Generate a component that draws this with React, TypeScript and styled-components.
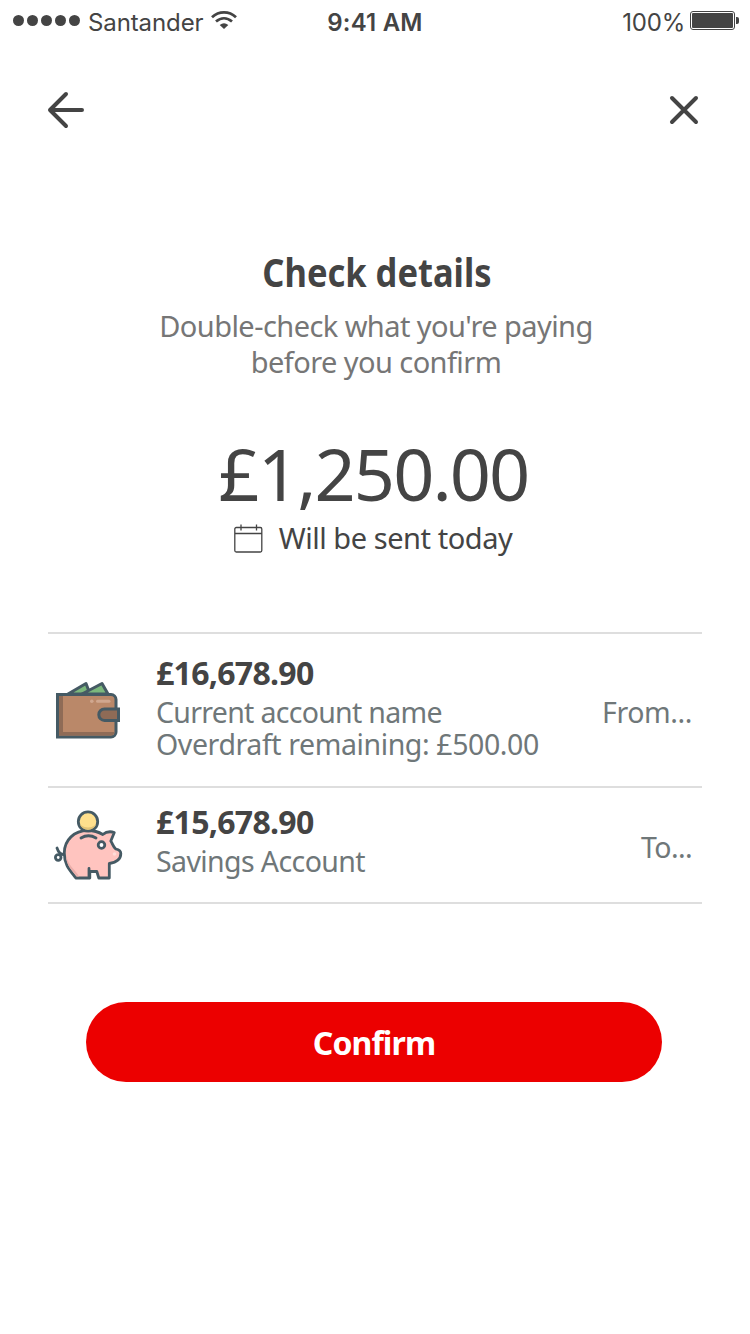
import React from "react";
import styled, { createGlobalStyle } from "styled-components";

const GlobalStyle = createGlobalStyle`
  * { box-sizing: border-box; }
  body { margin: 0; background: #fff; }
`;

const ink = "#444444";
const grey = "#767676";
const slate = "#6f7779";

const Screen = styled.main`
  width: 750px;
  height: 1334px;
  background: #fff;
  color: ${ink};
  font-family: "Noto Sans", "Open Sans", sans-serif;
  display: flex;
  flex-direction: column;
  overflow: hidden;
`;

const StatusBar = styled.header`
  height: 44px;
  flex: none;
  display: grid;
  grid-template-columns: 1fr auto 1fr;
  align-items: center;
  padding: 0 11px 0 13px;
  font-family: Inter, sans-serif;
  font-size: 24px;
  line-height: 42px;
`;

const StatusGroup = styled.div<{ $end?: boolean }>`
  display: flex;
  align-items: center;
  height: 44px;
  justify-content: ${(p) => (p.$end ? "flex-end" : "flex-start")};
`;

const Signal = styled.div`
  display: flex;
  gap: 3px;
  margin: 0 8px 3px 0;
`;

const Dot = styled.i`
  width: 11px;
  height: 11px;
  border-radius: 50%;
  background: ${ink};
`;

const StatusText = styled.span<{ $spacing: number }>`
  letter-spacing: ${(p) => p.$spacing}px;
  padding-top: 2px;
`;

const Clock = styled(StatusText)`
  font-weight: 600;
  margin-right: 2px;
`;

const WifiIcon = styled.svg`
  margin: 0 0 4px 7px;
`;

const BatteryIcon = styled.svg`
  margin: 0 0 3px 5px;
`;

const NavBar = styled.nav`
  flex: none;
  display: flex;
  justify-content: space-between;
  padding: 46px 50px 0 46px;
`;

const IconButton = styled.button`
  display: block;
  height: 40px;
  padding: 0;
  border: 0;
  background: none;
  color: ${ink};
`;

const Intro = styled.section`
  flex: none;
  display: flex;
  flex-direction: column;
  align-items: center;
  padding-top: 117px;
  text-align: center;
`;

const Title = styled.h1`
  margin: 0 0 0 3px;
  font-size: 40px;
  line-height: 50px;
  font-weight: 700;
  transform: scaleX(0.862);
`;

const Subtitle = styled.p`
  margin: 11px 0 0 2px;
  color: ${grey};
  font-size: 29px;
  line-height: 36px;
  letter-spacing: -0.57px;
`;

const Amount = styled.div`
  margin: 48px 3px 0 0;
  height: 90px;
  font-size: 72px;
  line-height: 90px;
  letter-spacing: -1.9px;
`;

const Schedule = styled.div`
  display: flex;
  align-items: center;
  gap: 16px;
  height: 40px;
  margin: 0 4px 0 0;
  font-size: 29px;
  line-height: 40px;
`;

const AccountList = styled.ul`
  flex: none;
  list-style: none;
  margin: 74px 48px 0;
  padding: 0;
  border-top: 2px solid #dedede;
`;

const AccountRow = styled.li<{ $height: number }>`
  display: grid;
  grid-template-columns: 80px 1fr auto;
  column-gap: 28px;
  align-items: center;
  height: ${(p) => p.$height}px;
  padding-right: 10px;
  border-bottom: 2px solid #dedede;
  color: ${slate};
  font-size: 28.500px;
  line-height: 32px;
`;

const AccountText = styled.div<{ $lift: number }>`
  padding-bottom: ${(p) => p.$lift}px;
`;

const Balance = styled.strong`
  display: block;
  margin-bottom: 5px;
  color: ${ink};
  font-size: 32px;
  line-height: 36px;
  letter-spacing: -0.7px;
`;

const Line = styled.div<{ $spacing?: number }>`
  letter-spacing: ${(p) => p.$spacing ?? 0}px;
`;

const Direction = styled(Line)`
  padding-top: 4px;
`;

const ConfirmButton = styled.button`
  flex: none;
  width: 576px;
  height: 80px;
  margin: 98px 0 0 86px;
  padding: 1px 0 0;
  border: 0;
  border-radius: 40px;
  background: #ec0000;
  color: #fff;
  font: 700 32px/79px "Noto Sans", "Open Sans", sans-serif;
  letter-spacing: -0.9px;
`;

const Wallet = () => (
  <svg width="80" height="80" viewBox="0 0 80 80" fill="none" stroke="#455a64" strokeWidth="3">
    <path d="M20 24 38 13.500 42 24Z" fill="#7cb87d" strokeLinejoin="round" />
    <path d="M34 24 54 13.500 60 24Z" fill="#7cb87d" strokeLinejoin="round" />
    <path d="M9.500 24.500H63a5 5 0 0 1 5 5V62a5 5 0 0 1-5 5H9.500Z" fill="#ba8869" />
    <path d="M11 26h4v36h51.500a4 4 0 0 1-4 3.500H11Z" fill="#8f6b56" stroke="none" />
    <path d="M49.500 31.200H61" stroke="#d0a78f" strokeLinecap="round" strokeWidth="3" />
    <circle cx="43.800" cy="31.200" r="1.800" fill="#d0a78f" stroke="none" />
    <path d="M70.500 39H56.500a5.700 5.700 0 0 0 0 11.400h14Z" fill="#8f6b56" />
  </svg>
);

const PiggyBank = () => (
  <svg width="80" height="80" viewBox="0 0 80 80" fill="none" stroke="#455a64" strokeWidth="2.800" strokeLinecap="round" strokeLinejoin="round">
    <path d="M28 73C22 65 16.500 60 16.500 48c0-13 10-22.500 23.500-22.500 6.500 0 11 1.500 15 4 3-2.500 7-3.500 11.500-2l-3.500 8.500c2 3 2.500 6.500 5 8 4 .8 5 2 5 4.500 0 6-5 9-11.500 10V73H51l-2-6.500h-7V73Z" fill="#ffc4bf" transform="translate(-.2 0)" />
    <path d="M18 50c2 11 10 15 13 21.500h-2C23 64.500 18 60 18 50Z" fill="#eaaeaa" stroke="none" />
    <path d="M41 63.500v8M33 33q7.500-4.500 15 0" />
    <circle cx="53.500" cy="40" r="3.300" fill="#fff" />
    <circle cx="66.500" cy="49" r="1.800" fill="#ffdcd8" stroke="none" />
    <circle cx="40" cy="16.500" r="9.700" fill="#ffe08d" />
    <path d="M31.800 19.500q8.200 6 16.400 0c-3 7-13.400 7-16.400 0Z" fill="#e3c477" stroke="none" />
    <circle cx="10.200" cy="52.500" r="2.800" />
    <path d="M9 43q2 6 6 6.500" />
  </svg>
);

export default function App() {
  return (
    <>
      <GlobalStyle />
      <Screen>
        <StatusBar>
          <StatusGroup>
            <Signal>
              {[0, 1, 2, 3, 4].map((n) => (
                <Dot key={n} />
              ))}
            </Signal>
            <StatusText $spacing={-0.1}>Santander</StatusText>
            <WifiIcon width="26" height="18" viewBox="0 0 26 18" fill="none" stroke={ink} strokeWidth="2.800">
              <path d="M1 6.200C8-.2 18-.2 25 6.200M5 10.500c5-4.300 11-4.300 16 0" />
              <path d="M8.700 14q4.300-3.600 8.600 0L13 18Z" fill={ink} stroke="none" />
            </WifiIcon>
          </StatusGroup>
          <Clock $spacing={0.2}>9:41 AM</Clock>
          <StatusGroup $end>
            <StatusText $spacing={-0.2}>100%</StatusText>
            <BatteryIcon width="49" height="19" viewBox="0 0 49 19">
              <rect x=".5" y=".5" width="44" height="18" rx="2.500" fill="none" stroke={ink} />
              <rect x="2" y="2" width="41" height="15" rx="1" fill={ink} />
              <path d="M46 6h1q2 0 2 2v3q0 2-2 2h-1Z" fill={ink} />
            </BatteryIcon>
          </StatusGroup>
        </StatusBar>
        <NavBar>
          <IconButton aria-label="Back">
            <svg width="40" height="40" viewBox="0 0 40 40" fill="none" stroke="currentColor" strokeWidth="4" strokeLinecap="round" strokeLinejoin="round">
              <path d="M36 20H4M20 4 4 20l16 16" />
            </svg>
          </IconButton>
          <IconButton aria-label="Close">
            <svg width="32" height="40" viewBox="0 0 32 40" fill="none" stroke="currentColor" strokeWidth="4" strokeLinecap="round">
              <path d="m4 8 24 24M28 8 4 32" />
            </svg>
          </IconButton>
        </NavBar>
        <Intro>
          <Title>Check details</Title>
          <Subtitle>
            Double-check what you're paying
            <br />
            before you confirm
          </Subtitle>
          <Amount>£1,250.00</Amount>
          <Schedule>
            <svg width="29" height="29" viewBox="0 0 29 29" fill="none" stroke={ink} strokeWidth="1.300">
              <rect x=".8" y="3.500" width="27" height="24.500" rx="1.500" />
              <path d="M1 9.500h27M7 .5v6M22.500.5v6" />
            </svg>
            <Line as="span" $spacing={-0.45}>Will be sent today</Line>
          </Schedule>
        </Intro>
        <AccountList>
          <AccountRow $height={154}>
            <Wallet />
            <AccountText $lift={5}>
              <Balance>£16,678.90</Balance>
              <Line $spacing={-0.7}>Current account name</Line>
              <Line $spacing={-0.4}>Overdraft remaining: £500.00</Line>
            </AccountText>
            <Direction $spacing={-0.4}>From...</Direction>
          </AccountRow>
          <AccountRow $height={116}>
            <PiggyBank />
            <AccountText $lift={9}>
              <Balance>£15,678.90</Balance>
              <Line $spacing={-0.6}>Savings Account</Line>
            </AccountText>
            <Direction $spacing={-0.6}>To...</Direction>
          </AccountRow>
        </AccountList>
        <ConfirmButton>Confirm</ConfirmButton>
      </Screen>
    </>
  );
}
